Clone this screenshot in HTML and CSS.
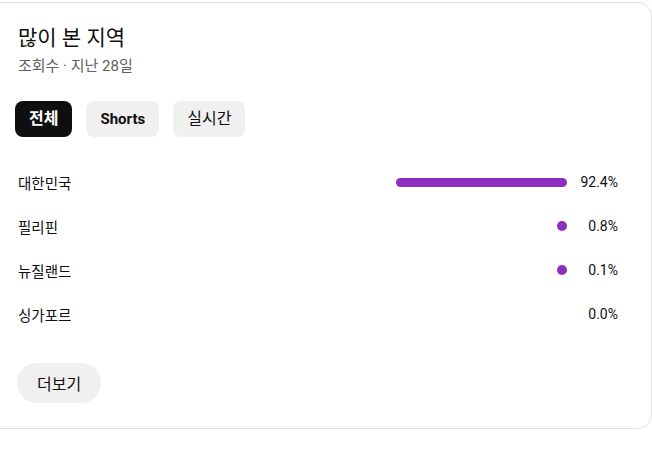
FILE: index.html
```html
<!DOCTYPE html>
<html lang="ko">
<head>
<meta charset="utf-8">
<link rel="stylesheet" href="styles.css">
</head>
<body>
<div class="card">
  <h1 class="title">많이 본 지역</h1>
  <div class="subtitle">조회수 · 지난 28일</div>
  <div class="chips">
    <button class="chip chip-active">전체</button>
    <button class="chip chip-bold">Shorts</button>
    <button class="chip">실시간</button>
  </div>
  <div class="rows">
    <div class="row">
      <span class="label">대한민국</span>
      <span class="track"><span class="bar" style="width:171px"></span></span>
      <span class="pct">92.4%</span>
    </div>
    <div class="row">
      <span class="label">필리핀</span>
      <span class="track"><span class="bar dot" style="width:10px"></span></span>
      <span class="pct">0.8%</span>
    </div>
    <div class="row">
      <span class="label">뉴질랜드</span>
      <span class="track"><span class="bar dot" style="width:10px"></span></span>
      <span class="pct">0.1%</span>
    </div>
    <div class="row">
      <span class="label">싱가포르</span>
      <span class="track"></span>
      <span class="pct">0.0%</span>
    </div>
  </div>
  <button class="more">더보기</button>
</div>
</body>
</html>
```
FILE: styles.css
```css
html, body {
  margin: 0;
  padding: 0;
  background: #ffffff;
}
body {
  padding-top: 2px;
  font-family: "Roboto", "Noto Sans CJK KR", sans-serif;
  color: #0f0f0f;
}
.card {
  margin-left: -20px;
  width: 672px;
  box-sizing: border-box;
  border: 1px solid #e0e0e0;
  border-radius: 14px;
  padding: 21px 33px 25px 37px;
  display: flex;
  flex-direction: column;
  align-items: flex-start;
}
.title {
  margin: 0;
  font-size: 21px;
  line-height: 28px;
  font-weight: 400;
}
.subtitle {
  margin-top: 4px;
  font-size: 15px;
  line-height: 20px;
  color: #606060;
}
.chips {
  display: flex;
  gap: 14px;
  margin-top: 25px;
  margin-left: -3px;
}
.chip {
  height: 36px;
  padding: 0 14px;
  border: none;
  border-radius: 8px;
  background: #f0f0f0;
  color: #0f0f0f;
  font-family: "Roboto", "Noto Sans CJK KR", sans-serif;
  font-size: 16px;
  font-weight: 400;
  line-height: 36px;
}
.chip-bold {
  font-weight: 700;
  font-size: 15px;
}
.chip-active {
  background: #0f0f0f;
  color: #ffffff;
  font-weight: 700;
}
.rows {
  margin-top: 23px;
  width: 100%;
  display: flex;
  flex-direction: column;
}
.row {
  height: 44px;
  display: flex;
  align-items: center;
  font-size: 14px;
}
.label {
  flex: 1;
  font-size: 14.5px;
}
.track {
  width: 185px;
  display: flex;
  justify-content: flex-end;
  align-items: center;
}
.bar {
  height: 9px;
  border-radius: 5px;
  background: #8c2fbf;
}
.dot {
  height: 10px;
}
.pct {
  width: 51px;
  text-align: right;
}
.more {
  margin-top: 27px;
  margin-left: -1px;
  height: 40px;
  padding: 0 20px;
  border: none;
  border-radius: 20px;
  background: #f0f0f0;
  color: #0f0f0f;
  font-family: "Roboto", "Noto Sans CJK KR", sans-serif;
  font-size: 16px;
}
```
